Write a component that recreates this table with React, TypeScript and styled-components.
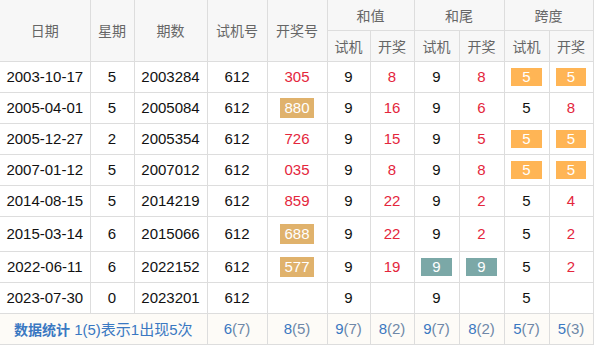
import styled, { createGlobalStyle } from 'styled-components';

const GlobalStyle = createGlobalStyle`
  html, body {
    margin: 0;
    padding: 0;
    background: #fff;
  }
  body {
    font-family: "Liberation Sans", "Noto Sans CJK SC", Arial, sans-serif;
  }
`;

const Table = styled.table`
  width: 593px;
  table-layout: fixed;
  border-collapse: collapse;
  font-size: 15px;
  color: #111;
  text-align: center;

  th,
  td {
    border: 1px solid #dddddd;
    padding: 0;
  }
  tr > :first-child {
    border-left: none;
  }
  thead tr:first-child th {
    border-top: none;
  }
`;

const HeadCell = styled.th`
  background: #f7f7f7;
  color: #666;
  font-family: "Noto Sans CJK SC", "Liberation Sans", sans-serif;
  font-size: 14px;
  font-weight: normal;
`;

const Row = styled.tr<{ $h?: number }>`
  height: ${(p) => p.$h ?? 31}px;
`;

const Red = styled.span`
  color: #e4263c;
`;

const Badge = styled.span<{ $tone: 'tan' | 'orange' | 'teal' }>`
  display: inline-block;
  color: #fff;
  line-height: ${(p) => (p.$tone === 'tan' ? 20 : 18)}px;
  padding: 0 ${(p) => (p.$tone === 'tan' ? 4 : 11)}px;
  background: ${(p) =>
    p.$tone === 'tan' ? '#e0b26c' : p.$tone === 'orange' ? '#ffb555' : '#7ba8a7'};
  vertical-align: middle;
`;

const Footer = styled.tr`
  height: 31px;
  td {
    background: #fdfbf7;
  }
`;

const Note = styled.td`
  color: #3a78c2;
  font-family: "Liberation Sans", "Noto Sans CJK SC", sans-serif;
  font-size: 15px;
  b {
    font-family: "Noto Sans CJK SC", sans-serif;
    font-size: 14px;
    font-weight: bold;
  }
`;

const Stat = styled.td`
  color: #3a78c2;
  span {
    color: #6f88a8;
  }
`;

type Cell = { v: string; kind?: 'red' | 'tan' | 'orange' | 'teal' };

interface IDraw {
  date: string;
  week: string;
  issue: string;
  test: string;
  open: Cell;
  sumT: Cell;
  sumO: Cell;
  tailT: Cell;
  tailO: Cell;
  spanT: Cell;
  spanO: Cell;
  h?: number;
}

const rows: IDraw[] = [
  {
    date: '2003-10-17', week: '5', issue: '2003284', test: '612',
    open: { v: '305', kind: 'red' }, sumT: { v: '9' }, sumO: { v: '8', kind: 'red' },
    tailT: { v: '9' }, tailO: { v: '8', kind: 'red' },
    spanT: { v: '5', kind: 'orange' }, spanO: { v: '5', kind: 'orange' },
  },
  {
    date: '2005-04-01', week: '5', issue: '2005084', test: '612',
    open: { v: '880', kind: 'tan' }, sumT: { v: '9' }, sumO: { v: '16', kind: 'red' },
    tailT: { v: '9' }, tailO: { v: '6', kind: 'red' },
    spanT: { v: '5' }, spanO: { v: '8', kind: 'red' },
  },
  {
    date: '2005-12-27', week: '2', issue: '2005354', test: '612',
    open: { v: '726', kind: 'red' }, sumT: { v: '9' }, sumO: { v: '15', kind: 'red' },
    tailT: { v: '9' }, tailO: { v: '5', kind: 'red' },
    spanT: { v: '5', kind: 'orange' }, spanO: { v: '5', kind: 'orange' },
  },
  {
    date: '2007-01-12', week: '5', issue: '2007012', test: '612',
    open: { v: '035', kind: 'red' }, sumT: { v: '9' }, sumO: { v: '8', kind: 'red' },
    tailT: { v: '9' }, tailO: { v: '8', kind: 'red' },
    spanT: { v: '5', kind: 'orange' }, spanO: { v: '5', kind: 'orange' },
  },
  {
    date: '2014-08-15', week: '5', issue: '2014219', test: '612',
    open: { v: '859', kind: 'red' }, sumT: { v: '9' }, sumO: { v: '22', kind: 'red' },
    tailT: { v: '9' }, tailO: { v: '2', kind: 'red' },
    spanT: { v: '5' }, spanO: { v: '4', kind: 'red' },
  },
  {
    date: '2015-03-14', week: '6', issue: '2015066', test: '612',
    open: { v: '688', kind: 'tan' }, sumT: { v: '9' }, sumO: { v: '22', kind: 'red' },
    tailT: { v: '9' }, tailO: { v: '2', kind: 'red' },
    spanT: { v: '5' }, spanO: { v: '2', kind: 'red' }, h: 35,
  },
  {
    date: '2022-06-11', week: '6', issue: '2022152', test: '612',
    open: { v: '577', kind: 'tan' }, sumT: { v: '9' }, sumO: { v: '19', kind: 'red' },
    tailT: { v: '9', kind: 'teal' }, tailO: { v: '9', kind: 'teal' },
    spanT: { v: '5' }, spanO: { v: '2', kind: 'red' },
  },
  {
    date: '2023-07-30', week: '0', issue: '2023201', test: '612',
    open: { v: '' }, sumT: { v: '9' }, sumO: { v: '' },
    tailT: { v: '9' }, tailO: { v: '' },
    spanT: { v: '5' }, spanO: { v: '' },
  },
];

const stats = [
  ['6', '7'], ['8', '5'], ['9', '7'], ['8', '2'], ['9', '7'], ['8', '2'], ['5', '7'], ['5', '3'],
];

const widths = [90, 44, 73, 60, 60, 43, 44, 45, 45, 45, 44];

function renderCell(c: Cell) {
  if (!c.kind) return c.v;
  if (c.kind === 'red') return <Red>{c.v}</Red>;
  return <Badge $tone={c.kind}>{c.v}</Badge>;
}

export default function App() {
  return (
    <>
      <GlobalStyle />
      <Table>
        <colgroup>
          {widths.map((w, i) => (
            <col key={i} style={{ width: w }} />
          ))}
        </colgroup>
        <thead>
          <Row $h={30}>
            <HeadCell rowSpan={2}>日期</HeadCell>
            <HeadCell rowSpan={2}>星期</HeadCell>
            <HeadCell rowSpan={2}>期数</HeadCell>
            <HeadCell rowSpan={2}>试机号</HeadCell>
            <HeadCell rowSpan={2}>开奖号</HeadCell>
            <HeadCell colSpan={2}>和值</HeadCell>
            <HeadCell colSpan={2}>和尾</HeadCell>
            <HeadCell colSpan={2}>跨度</HeadCell>
          </Row>
          <Row>
            <HeadCell>试机</HeadCell>
            <HeadCell>开奖</HeadCell>
            <HeadCell>试机</HeadCell>
            <HeadCell>开奖</HeadCell>
            <HeadCell>试机</HeadCell>
            <HeadCell>开奖</HeadCell>
          </Row>
        </thead>
        <tbody>
          {rows.map((r) => (
            <Row key={r.issue} $h={r.h}>
              <td>{r.date}</td>
              <td>{r.week}</td>
              <td>{r.issue}</td>
              <td>{r.test}</td>
              <td>{renderCell(r.open)}</td>
              <td>{renderCell(r.sumT)}</td>
              <td>{renderCell(r.sumO)}</td>
              <td>{renderCell(r.tailT)}</td>
              <td>{renderCell(r.tailO)}</td>
              <td>{renderCell(r.spanT)}</td>
              <td>{renderCell(r.spanO)}</td>
            </Row>
          ))}
          <Footer>
            <Note colSpan={3}>
              <b>数据统计</b> 1(5)表示1出现5次
            </Note>
            {stats.map(([n, c], i) => (
              <Stat key={i}>
                {n}
                <span>({c})</span>
              </Stat>
            ))}
          </Footer>
        </tbody>
      </Table>
    </>
  );
}
